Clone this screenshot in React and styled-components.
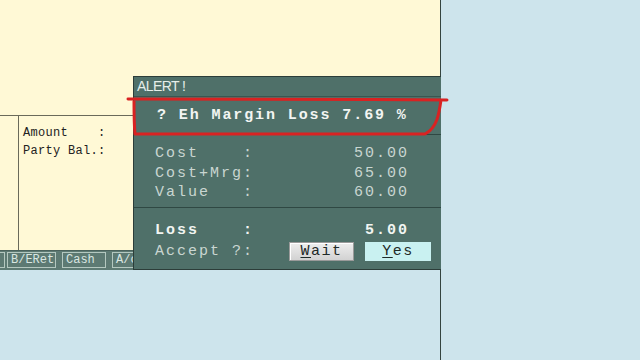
import React from 'react';
import styled, { createGlobalStyle } from 'styled-components';

const GlobalStyle = createGlobalStyle`
  html, body {
    margin: 0;
    padding: 0;
    background: #cde4ec;
  }
  * {
    box-sizing: border-box;
  }
`;

const mono = `"Liberation Mono", "Courier New", monospace`;

const Screen = styled.div`
  position: relative;
  display: flex;
  width: 640px;
  height: 360px;
  overflow: hidden;
  background: #cde4ec;
`;

const LeftPane = styled.div`
  display: flex;
  flex-direction: column;
  width: 441px;
  height: 360px;
  border-right: 1px solid #34443f;
  overflow: hidden;
`;

const Window = styled.div`
  display: flex;
  flex-direction: column;
  height: 270px;
  background: #fff9d6;
`;

const TopArea = styled.div`
  height: 116px;
  border-bottom: 1px solid #6a6a5a;
`;

const DetailArea = styled.div`
  display: flex;
  flex: 1;
`;

const Strip = styled.div`
  width: 19px;
  border-right: 1px solid #6a6a5a;
`;

const Info = styled.div`
  display: flex;
  flex-direction: column;
  padding: 8px 0 0 4px;
  font-family: ${mono};
  font-size: 12px;
  letter-spacing: 0.3px;
  line-height: 18px;
  color: #222;
  white-space: pre;
`;

const KeyBar = styled.div`
  display: flex;
  align-items: center;
  height: 20px;
  padding-bottom: 1px;
  background: #5d7a73;
  border-top: 1px solid #4a625c;
`;

const Key = styled.div`
  flex: none;
  width: ${p => p.$w};
  margin-left: ${p => p.$ml || '0'};
  margin-right: 6px;
  padding-left: 3px;
  height: 16px;
  line-height: 14px;
  border: 1px solid #b4c8c0;
  font-family: ${mono};
  font-size: 12px;
  color: #d9e6e1;
  white-space: pre;
`;

const Dialog = styled.div`
  position: absolute;
  left: 133px;
  top: 76px;
  width: 308px;
  height: 194px;
  display: flex;
  flex-direction: column;
  background: #4f7069;
  border: 1px solid #2c3d39;
  border-right: none;
`;

const Title = styled.div`
  height: 20px;
  padding: 0 0 0 3px;
  font-family: "Liberation Sans", Arial, sans-serif;
  font-size: 14px;
  letter-spacing: -0.6px;
  line-height: 19px;
  color: #e6eee9;
  border-bottom: 1px solid #3b5651;
`;

const Message = styled.div`
  height: 38px;
  display: flex;
  align-items: center;
  padding-left: 23px;
  font-family: ${mono};
  font-size: 15px;
  font-weight: bold;
  letter-spacing: 1.9px;
  color: #f2f5f2;
  white-space: pre;
  border-bottom: 1px solid #2f4843;
`;

const Section = styled.div`
  display: flex;
  flex-direction: column;
  padding: ${p => p.$pad};
  border-bottom: ${p => (p.$divider ? '1px solid #2f4843' : 'none')};
  height: ${p => p.$height || 'auto'};
`;

const Row = styled.div`
  display: flex;
  align-items: center;
  justify-content: space-between;
  height: ${p => p.$h || '19.5px'};
  padding: 0 32px 0 21px;
  font-family: ${mono};
  font-size: 15px;
  letter-spacing: 2px;
  font-weight: ${p => (p.$bold ? 'bold' : 'normal')};
  color: ${p => (p.$bold ? '#f2f5f2' : '#c9d6d1')};
  white-space: pre;
`;

const Buttons = styled.div`
  display: flex;
  gap: 11px;
  margin-right: -22px;
`;

const Button = styled.div`
  width: ${p => p.$w};
  height: 19px;
  display: flex;
  align-items: center;
  justify-content: center;
  font-family: ${mono};
  font-size: 15px;
  font-weight: normal;
  letter-spacing: 1.5px;
  color: #1f2a28;
  background: ${p => (p.$primary ? '#c9f1f1' : 'linear-gradient(#eeeeee, #d2d2d2)')};
  border: ${p => (p.$primary ? '1px solid #c9f1f1' : '1px solid #9a9a9a')};
  box-shadow: ${p => (p.$primary ? 'none' : 'inset 1px 1px 0 #ffffff')};

  u {
    text-decoration-thickness: 1px;
    text-underline-offset: 2px;
  }
`;

const Marker = styled.svg`
  position: absolute;
  left: 126px;
  top: 94px;
  width: 324px;
  height: 46px;
  pointer-events: none;
`;

const BlueBelow = styled.div`
  flex: 1;
`;

const App = () => (
  <>
    <GlobalStyle />
    <Screen>
      <LeftPane>
        <Window>
          <TopArea />
          <DetailArea>
            <Strip />
            <Info>
              <span>Amount    :</span>
              <span>Party Bal.:</span>
            </Info>
          </DetailArea>
          <KeyBar>
            <Key $w="12px" $ml="-7px" />
            <Key $w="49px" $ml="-4px">B/ERet</Key>
            <Key $w="44px">Cash</Key>
            <Key $w="44px">A/c</Key>
          </KeyBar>
        </Window>
        <BlueBelow />
      </LeftPane>

      <Dialog>
        <Title>ALERT !</Title>
        <Message>? Eh Margin Loss 7.69 %</Message>
        <Section $pad="9px 0 0 0" $height="73px" $divider>
          <Row>
            <span>Cost    :</span>
            <span>50.00</span>
          </Row>
          <Row>
            <span>Cost+Mrg:</span>
            <span>65.00</span>
          </Row>
          <Row>
            <span>Value   :</span>
            <span>60.00</span>
          </Row>
        </Section>
        <Section $pad="13px 0 0 0">
          <Row $bold>
            <span>Loss    :</span>
            <span>5.00</span>
          </Row>
          <Row $h="21px">
            <span>Accept ?:</span>
            <Buttons>
              <Button $w="65px">
                <span><u>W</u>ait</span>
              </Button>
              <Button $w="66px" $primary>
                <span><u>Y</u>es</span>
              </Button>
            </Buttons>
          </Row>
        </Section>
      </Dialog>

      <Marker viewBox="0 0 324 46">
        <path
          d="M2 5 C 90 6, 210 5, 321 6 M315 6 C 313 20, 311 34, 299 40 C 220 40, 110 40, 9 40 C 8 30, 8 16, 8 6"
          fill="none"
          stroke="#d92222"
          strokeWidth="3"
          strokeLinecap="round"
          strokeLinejoin="round"
        />
      </Marker>
    </Screen>
  </>
);

export default App;
